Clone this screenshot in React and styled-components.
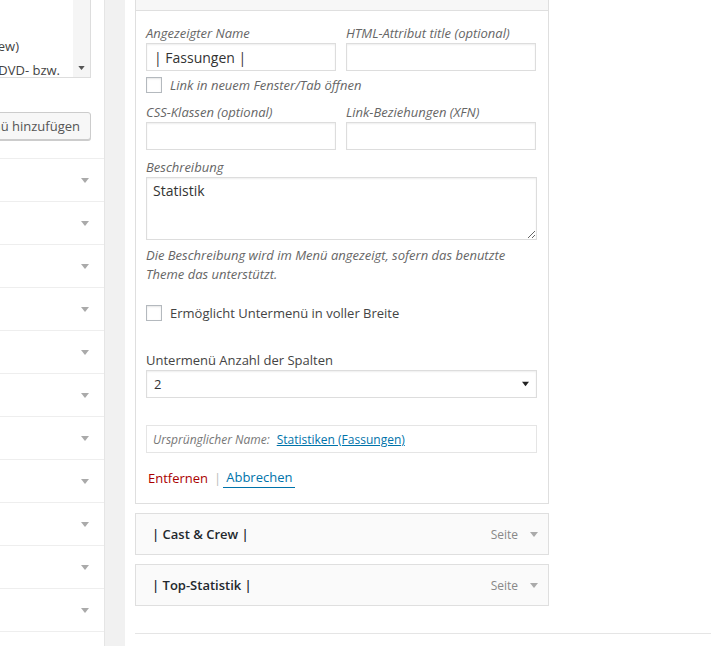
import React from "react";
import styled, { createGlobalStyle } from "styled-components";

const GlobalStyle = createGlobalStyle`
  html, body {
    margin: 0;
    padding: 0;
    background: #fff;
  }
  body {
    font-family: "Open Sans", "Liberation Sans", sans-serif;
    font-size: 13px;
    color: #444;
  }
  * {
    box-sizing: border-box;
  }
`;

const Page = styled.div`
  display: flex;
  width: 100vw;
  height: 100vh;
  overflow: hidden;
`;

/* left column: the "add items" meta boxes */
const Sidebar = styled.div`
  width: 105px;
  flex-shrink: 0;
  display: flex;
  flex-direction: column;
  background: #fff;
  border-right: 1px solid #e5e5e5;
  overflow: hidden;
`;

const Gutter = styled.div`
  width: 20px;
  flex-shrink: 0;
  background: #f1f1f1;
`;

const OpenBox = styled.div`
  height: 159px;
  flex-shrink: 0;
  border-bottom: 1px solid #eee;
`;

const ListBox = styled.div`
  display: flex;
  width: 91px;
  height: 78px;
  border-right: 1px solid #ddd;
  border-bottom: 1px solid #ddd;
  background: #fff;
`;

const ListText = styled.div`
  flex: 1;
  overflow: hidden;
  padding-top: 34px;
  color: #444;
  font-size: 13px;
  line-height: 24px;
`;

const ListLine = styled.div`
  display: flex;
  justify-content: flex-end;
  white-space: nowrap;
  padding-right: ${(p) => p.$trail}px;
`;

const ScrollBar = styled.div`
  width: 17px;
  flex-shrink: 0;
  display: flex;
  align-items: flex-end;
  justify-content: center;
  padding-bottom: 7px;
  background: #f5f5f5;
`;

const ButtonRow = styled.div`
  display: flex;
  justify-content: flex-end;
  width: 91px;
  margin-top: 34px;
`;

const SecondaryButton = styled.button`
  flex-shrink: 0;
  height: 28px;
  padding: 0 10px;
  white-space: nowrap;
  font-family: inherit;
  font-size: 13px;
  color: #555;
  background: #f7f7f7;
  border: 1px solid #ccc;
  border-radius: 3px;
  box-shadow: 0 1px 0 #ccc;
`;

const SideRow = styled.div`
  height: 43px;
  flex-shrink: 0;
  display: flex;
  align-items: center;
  justify-content: flex-end;
  padding-right: 15px;
  border-bottom: 1px solid #eee;
`;

/* right column: the menu structure */
const Main = styled.div`
  flex: 1;
  display: flex;
  flex-direction: column;
  padding-left: 10px;
`;

const MenuItem = styled.div`
  width: 414px;
  flex-shrink: 0;
  margin-top: ${(p) => p.$offset || 0}px;
`;

const ItemBar = styled.div`
  height: 42px;
  display: flex;
  align-items: center;
  padding: 0 10px 0 16px;
  background: ${(p) => (p.$open ? "#f7f7f7" : "#fafafa")};
  border: 1px solid #dfdfdf;
`;

const ItemTitle = styled.span`
  flex: 1;
  font-size: 13px;
  font-weight: 600;
  color: #23282d;
`;

const ItemType = styled.span`
  font-size: 12px;
  color: #888;
  margin-right: 12px;
`;

const Settings = styled.div`
  display: flex;
  flex-direction: column;
  padding: 12px 11px 15px 10px;
  background: #fff;
  border: 1px solid #dfdfdf;
  border-top: 0;
`;

const TwoCols = styled.div`
  display: grid;
  grid-template-columns: 190px 190px;
  column-gap: 10px;
  margin-top: ${(p) => p.$gap || 0}px;
`;

const Field = styled.label`
  display: flex;
  flex-direction: column;
  margin-top: ${(p) => p.$gap || 0}px;
`;

const FieldLabel = styled.span`
  line-height: 20px;
  font-size: 13px;
  font-style: ${(p) => (p.$plain ? "normal" : "italic")};
  color: ${(p) => (p.$plain ? "#444" : "#666")};
`;

const TextInput = styled.input`
  width: 100%;
  height: 28px;
  margin: 0;
  padding: 0 7px;
  font-family: inherit;
  font-size: 14px;
  color: #333;
  background: #fff;
  border: 1px solid #ddd;
  border-radius: 0;
  box-shadow: inset 0 1px 2px rgba(0, 0, 0, 0.07);
  outline: none;
`;

const TextArea = styled.textarea`
  width: 100%;
  height: 63px;
  margin: 0;
  padding: 3px 6px;
  font-family: inherit;
  font-size: 14px;
  line-height: 20px;
  color: #333;
  border: 1px solid #ddd;
  box-shadow: inset 0 1px 2px rgba(0, 0, 0, 0.07);
  outline: none;
  resize: vertical;
`;

const CheckRow = styled.div`
  display: flex;
  align-items: center;
  height: 16px;
  margin-top: ${(p) => p.$gap}px;
`;

const CheckBox = styled.span`
  width: 16px;
  height: 16px;
  flex-shrink: 0;
  margin-right: 8px;
  background: #fff;
  border: 1px solid #b4b9be;
  box-shadow: inset 0 1px 2px rgba(0, 0, 0, 0.1);
`;

const CheckLabel = styled.span`
  font-size: 13px;
  line-height: 20px;
  font-style: ${(p) => (p.$italic ? "italic" : "normal")};
  color: ${(p) => (p.$italic ? "#666" : "#444")};
`;

const Hint = styled.p`
  margin: 6px 0 0;
  font-size: 13px;
  font-style: italic;
  line-height: 19px;
  color: #666;
`;

const SelectBox = styled.div`
  height: 28px;
  display: flex;
  align-items: center;
  justify-content: space-between;
  padding: 0 7px;
  font-size: 13px;
  color: #333;
  background: #fff;
  border: 1px solid #ddd;
  box-shadow: inset 0 1px 2px rgba(0, 0, 0, 0.07);
`;

const OriginalName = styled.div`
  height: 28px;
  display: flex;
  align-items: center;
  margin-top: 27px;
  padding: 0 6px;
  font-size: 12px;
  background: #fff;
  border: 1px solid #e5e5e5;
`;

const OriginalLabel = styled.span`
  font-style: italic;
  color: #777;
  margin-right: 7px;
`;

const Link = styled.a`
  color: #0073aa;
  text-decoration: underline;
  cursor: pointer;
`;

const Actions = styled.div`
  display: flex;
  align-items: center;
  margin-top: 15px;
  padding-left: 2px;
  line-height: 20px;
  font-size: 13px;
`;

const DeleteLink = styled.a`
  color: #a00;
  cursor: pointer;
`;

const Sep = styled.span`
  color: #bbb;
  margin: 0 2px 0 6px;
`;

const CancelLink = styled.a`
  padding: 0 3px;
  color: #0073aa;
  border-bottom: 1px solid #0073aa;
  line-height: 19px;
  cursor: pointer;
`;

const Divider = styled.div`
  margin-top: 27px;
  border-top: 1px solid #e5e5e5;
`;

function Caret({ color = "#aaa", width = 8, height = 5 }) {
  return (
    <svg width={width} height={height} viewBox="0 0 8 5">
      <path d="M0 0h8L4 5z" fill={color} />
    </svg>
  );
}

const collapsedItems = ["| Cast & Crew |", "| Top-Statistik |"];

export default function App() {
  return (
    <>
      <GlobalStyle />
      <Page>
        <Sidebar>
          <OpenBox>
            <ListBox>
              <ListText>
                <ListLine $trail={54}>Statistiken (Cast &amp; Crew)</ListLine>
                <ListLine $trail={13}>Informationen zur DVD- bzw.</ListLine>
              </ListText>
              <ScrollBar>
                <Caret color="#555" width={7} height={4} />
              </ScrollBar>
            </ListBox>
            <ButtonRow>
              <SecondaryButton>Zum Menü hinzufügen</SecondaryButton>
            </ButtonRow>
          </OpenBox>
          {Array.from({ length: 12 }).map((_, i) => (
            <SideRow key={i}>
              <Caret />
            </SideRow>
          ))}
        </Sidebar>
        <Gutter />
        <Main>
          <MenuItem $offset={-31}>
            <ItemBar $open>
              <ItemTitle>| Fassungen |</ItemTitle>
              <ItemType>Seite</ItemType>
              <Caret />
            </ItemBar>
            <Settings>
              <TwoCols>
                <Field>
                  <FieldLabel>Angezeigter Name</FieldLabel>
                  <TextInput defaultValue="| Fassungen |" />
                </Field>
                <Field>
                  <FieldLabel>HTML-Attribut title (optional)</FieldLabel>
                  <TextInput />
                </Field>
              </TwoCols>
              <CheckRow $gap={6}>
                <CheckBox />
                <CheckLabel $italic>Link in neuem Fenster/Tab öffnen</CheckLabel>
              </CheckRow>
              <TwoCols $gap={9}>
                <Field>
                  <FieldLabel>CSS-Klassen (optional)</FieldLabel>
                  <TextInput />
                </Field>
                <Field>
                  <FieldLabel>Link-Beziehungen (XFN)</FieldLabel>
                  <TextInput />
                </Field>
              </TwoCols>
              <Field $gap={7}>
                <FieldLabel>Beschreibung</FieldLabel>
                <TextArea defaultValue="Statistik" />
              </Field>
              <Hint>
                Die Beschreibung wird im Menü angezeigt, sofern das benutzte
                Theme das unterstützt.
              </Hint>
              <CheckRow $gap={21}>
                <CheckBox />
                <CheckLabel>Ermöglicht Untermenü in voller Breite</CheckLabel>
              </CheckRow>
              <Field $gap={29}>
                <FieldLabel $plain>Untermenü Anzahl der Spalten</FieldLabel>
                <SelectBox>
                  <span>2</span>
                  <Caret color="#222" width={7} height={6} />
                </SelectBox>
              </Field>
              <OriginalName>
                <OriginalLabel>Ursprünglicher Name:</OriginalLabel>
                <Link>Statistiken (Fassungen)</Link>
              </OriginalName>
              <Actions>
                <DeleteLink>Entfernen</DeleteLink>
                <Sep>|</Sep>
                <CancelLink>Abbrechen</CancelLink>
              </Actions>
            </Settings>
          </MenuItem>
          {collapsedItems.map((title) => (
            <MenuItem key={title} $offset={9}>
              <ItemBar>
                <ItemTitle>{title}</ItemTitle>
                <ItemType>Seite</ItemType>
                <Caret />
              </ItemBar>
            </MenuItem>
          ))}
          <Divider />
        </Main>
      </Page>
    </>
  );
}
